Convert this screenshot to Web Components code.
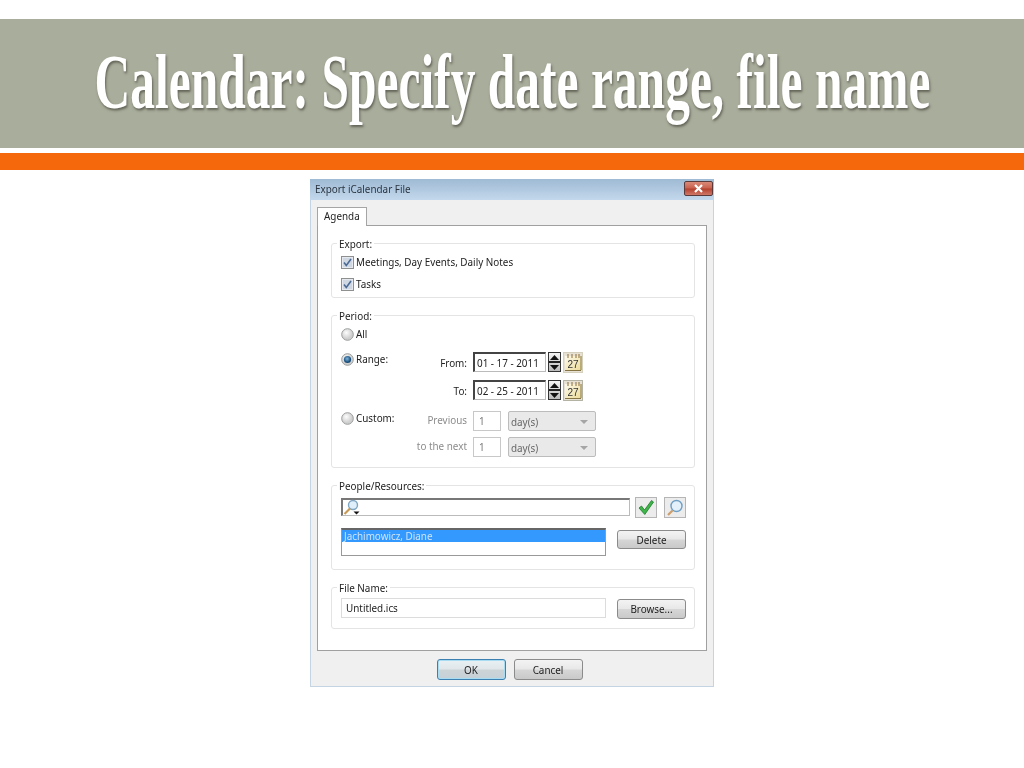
<!doctype html>
<html>
<head>
<meta charset="utf-8">
<title>Calendar: Specify date range, file name</title>
<style>
  html, body { margin: 0; background: #fff; }
  body { font-family: "Noto Sans", "DejaVu Sans", sans-serif; font-size: 9.9px; color: #222; }
</style>
</head>
<body>
<slide-page>
  <slide-title slot="title">Calendar: Specify date range, file name</slide-title>
  <export-dialog heading="Export iCalendar File" tab="Agenda">

    <group-box legend="Export:" pad="7px 9px 2px">
      <div style="display:flex;flex-direction:column">
        <check-row>Meetings, Day Events, Daily Notes</check-row>
        <check-row>Tasks</check-row>
      </div>
    </group-box>

    <group-box legend="Period:" pad="8px 9px 10px">
      <period-form></period-form>
    </group-box>

    <group-box legend="People/Resources:" pad="11px 8px 13px 9px">
      <people-form></people-form>
    </group-box>

    <group-box legend="File Name:" pad="10px 9px 9px">
      <div style="display:flex;align-items:flex-start;gap:11px">
        <text-box w="265" h="20" flat>Untitled.ics</text-box>
        <push-button w="69" h="20" style="margin-top:1px">Browse...</push-button>
      </div>
    </group-box>

    <push-button slot="buttons" w="69" h="21" focused>OK</push-button>
    <push-button slot="buttons" w="69" h="21">Cancel</push-button>
  </export-dialog>
</slide-page>

<script>
function make(name, css, html, setup) {
  customElements.define(name, class extends HTMLElement {
    connectedCallback() {
      if (this.shadowRoot) return
      const root = this.attachShadow({mode: 'open'})
      const attr = (k, d) => this.hasAttribute(k) ? (this.getAttribute(k) || true) : d
      root.innerHTML = `<style>${css}</style>${typeof html === 'function' ? html(attr) : html}`
      if (setup) setup(root, attr, this)
    }
  })
}

make('slide-page', `
  :host { display: block; height: 768px; overflow: hidden; }
  .band { margin-top: 19px; height: 129px; background: #a9ad9b; display: flex; align-items: center; justify-content: center; }
  .rule { margin-top: 5px; height: 17px; background: #f5680c; }
  main { display: flex; justify-content: center; padding: 9px 0 0 0; }
`, `
  <div class="band"><slot name="title"></slot></div>
  <div class="rule"></div>
  <main><slot></slot></main>
`)

make('slide-title', `
  :host { display: block; margin: -2px 0 0 1px; }
  span {
    display: inline-block; white-space: nowrap;
    font: bold 49.5px "Liberation Serif", serif; color: #fff;
    transform: scaleY(1.56);
    text-shadow: 1px 1px 2px rgba(60,60,50,.65);
  }
`, `<span><slot></slot></span>`)

make('export-dialog', `
  :host { display: block; width: 404px; height: 508px; margin-left: 0; }
  .win { height: 100%; box-sizing: border-box; background: #f0f0f0; border: 1px solid #c4d4e2; border-top: 0; display: flex; flex-direction: column; filter: blur(.3px); }
  .bar { height: 21px; margin: 0 -1px; flex: none; background: linear-gradient(#9fbad4, #c3d8ec); display: flex; align-items: center; justify-content: space-between; padding: 0 1px 0 5px; color: #2a3440; }
  .bar span { margin-top: -1px; }
  .close { width: 29px; height: 15px; box-sizing: border-box; margin-top: -3px; border: 1px solid #5a3a3a; border-radius: 2px; background: linear-gradient(#d98a78 0, #c9604e 48%, #b4402e 52%, #cf7868 100%); display: flex; align-items: center; justify-content: center; }
  .body { flex: 1; padding: 7px 6px 0; display: flex; flex-direction: column; }
  .tab { align-self: flex-start; width: 50px; height: 19px; box-sizing: border-box; background: #fff; border: 1px solid #a5a5a5; border-bottom: 0; padding-left: 6px; line-height: 17px; position: relative; z-index: 1; margin-bottom: -1px; }
  .panel { height: 426px; box-sizing: border-box; background: #fff; border: 1px solid #a0a0a0; padding: 17px 11px 0 13px; display: flex; flex-direction: column; gap: 17px; }
  .foot { display: flex; justify-content: center; gap: 8px; padding: 8px 0 0 0; margin-left: -5px; }
`, a => `
  <div class="win">
    <div class="bar"><span>${a('heading')}</span>
      <div class="close"><svg width="11" height="9" viewBox="0 0 11 9"><path d="M2 1l7 7M9 1L2 8" stroke="#fff" stroke-width="2.2" fill="none"/></svg></div>
    </div>
    <div class="body">
      <div class="tab">${a('tab')}</div>
      <div class="panel"><slot></slot></div>
      <div class="foot"><slot name="buttons"></slot></div>
    </div>
  </div>
`)

make('group-box', `
  :host { display: block; }
  .box { position: relative; border: 1px solid #e4e4e4; border-radius: 3px; }
  .legend { position: absolute; left: 5px; top: -6px; background: #fff; padding: 0 2px; line-height: 13px; }
`, a => `<div class="box" style="padding:${a('pad')}"><span class="legend">${a('legend')}</span><slot></slot></div>`)

make('check-row', `
  :host { display: flex; align-items: center; gap: 2px; height: 22px; }
  svg { flex: none; }
`, `
  <svg width="13" height="13" viewBox="0 0 13 13">
    <rect x=".5" y=".5" width="12" height="12" fill="#e6eaf0" stroke="#8e8f8f"/>
    <rect x="2" y="2" width="9" height="9" fill="#cfd7e2"/>
    <path d="M3 6.5l2.3 3L10 3" stroke="#4a6a96" stroke-width="1.6" fill="none"/>
  </svg>
  <slot></slot>
`)

make('radio-mark', `
  :host { display: inline-flex; flex: none; width: 13px; height: 13px; }
`, a => `
  <svg width="13" height="13" viewBox="0 0 13 13">
    <defs><radialGradient id="g" cx=".4" cy=".35"><stop offset="0" stop-color="#fdfdfd"/><stop offset="1" stop-color="#cfcfcf"/></radialGradient>
    <radialGradient id="d" cx=".45" cy=".4"><stop offset="0" stop-color="#7fb6dc"/><stop offset="1" stop-color="#164a78"/></radialGradient></defs>
    <circle cx="6.5" cy="6.5" r="5.8" fill="url(#g)" stroke="#9a9c9c"/>
    ${a('on') ? '<circle cx="6.5" cy="6.5" r="3.6" fill="url(#d)"/>' : ''}
  </svg>
`)

make('text-box', `
  :host { display: block; flex: none; }
  div { box-sizing: border-box; height: 100%; background: #fff; display: flex; align-items: center; white-space: nowrap; }
  .sunk { border: 1px solid #bbb; border-top: 2px solid #444; border-left: 2px solid #444; padding-left: 2px; color: #222; }
  .flat { border: 1px solid #dcdcdc; padding-left: 4px; }
  .off { border: 1px solid #c8c8c8; padding-left: 5px; color: #777; }
`, a => `<div class="${a('off') ? 'off' : a('flat') ? 'flat' : 'sunk'}" style="width:${a('w')}px;height:${a('h')}px"><slot></slot></div>`)

make('push-button', `
  :host { display: block; flex: none; }
  button { display: block; width: 100%; height: 100%; box-sizing: border-box; padding: 0; font: inherit; color: #222; border: 1px solid #8b8b8b; border-radius: 3px; background: linear-gradient(#f3f3f3 0, #e8e8e8 48%, #d6d6d6 52%, #c9c9c9 100%); }
  .focus { border: 1px solid #3c7fb1; box-shadow: inset 0 0 0 1px #a8dcf2; background: linear-gradient(#e9f1f5 0, #e0e6ea 48%, #cdd4d8 52%, #c4d0d6 100%); }
`, a => `<button class="${a('focused') ? 'focus' : ''}" style="width:${a('w')}px;height:${a('h')}px"><slot></slot></button>`)

make('date-picker', `
  :host { display: flex; flex: none; align-items: flex-start; gap: 2px; height: 20px; }
  .spin { width: 13px; height: 20px; box-sizing: border-box; border: 1px solid #333; background: linear-gradient(#f4f4f4, #bbb); }
  .spin { display: flex; flex-direction: column; }
  .spin i { flex: 1; display: flex; align-items: center; justify-content: center; }
  .spin i + i { border-top: 2px solid #222; }
`, a => `
  <text-box w="73" h="20">${a('value')}</text-box>
  <div class="spin">
    <i><svg width="9" height="5"><path d="M4.5 0L9 5H0z" fill="#111"/></svg></i>
    <i><svg width="9" height="5"><path d="M0 0h9L4.5 5z" fill="#111"/></svg></i>
  </div>
  <svg width="20" height="21" viewBox="0 0 20 21">
    <defs><linearGradient id="c" x1="0" y1="0" x2="1" y2="1"><stop offset="0" stop-color="#fdfaec"/><stop offset="1" stop-color="#ecdc9a"/></linearGradient></defs>
    <rect x=".5" y=".5" width="19" height="20" fill="#e6e1d2" stroke="${a('active') ? '#77775f' : '#d5cfbd'}" ${a('active') ? 'stroke-dasharray="1 1"' : ''}/>
    <rect x="2" y="4" width="16" height="14" fill="url(#c)"/>
    <path d="M5 2v4M9 2v4M13 2v4M16 2v4" stroke="#8a6d3a" stroke-width="1"/>
    <path d="M2 18.5h16M18 4v14" stroke="#857545"/>
    <text x="10" y="16" text-anchor="middle" font-family="Liberation Sans, sans-serif" font-size="10" fill="#333">27</text>
  </svg>
`)

make('combo-box', `
  :host { display: block; flex: none; }
  div { width: 88px; height: 20px; box-sizing: border-box; border: 1px solid #bcbcbc; border-radius: 2px; background: #e9e9e9; color: #666; display: flex; align-items: center; justify-content: space-between; padding: 1px 7px 0 2px; }
`, `<div><slot></slot><svg width="8" height="4"><path d="M0 0h8L4 4z" fill="#a5a5a5"/></svg></div>`)

make('period-form', `
  :host { display: block; }
  .row { display: flex; align-items: flex-start; height: 20px; }
  .pick { display: flex; align-items: center; gap: 2px; width: 74px; flex: none; line-height: 14px; }
  .lab { width: 52px; flex: none; text-align: right; line-height: 20px; padding-top: 1px; box-sizing: border-box; }
  .dim { color: #8c8c8c; padding-top: 0; line-height: 18px; }
  .ctl { margin-left: 6px; display: flex; gap: 7px; }
`, `
  <div class="row" style="padding-top:3px;box-sizing:border-box"><div class="pick"><radio-mark></radio-mark>All</div></div>
  <div class="row" style="margin-top:8px"><div class="pick"><radio-mark on></radio-mark>Range:</div><div class="lab">From:</div><div class="ctl"><date-picker value="01 - 17 - 2011"></date-picker></div></div>
  <div class="row" style="margin-top:8px"><div class="pick"></div><div class="lab">To:</div><div class="ctl"><date-picker value="02 - 25 - 2011" active></date-picker></div></div>
  <div class="row" style="margin-top:11px"><div class="pick"><radio-mark></radio-mark>Custom:</div><div class="lab dim">Previous</div><div class="ctl"><text-box w="28" h="20" off>1</text-box><combo-box>day(s)</combo-box></div></div>
  <div class="row" style="margin-top:6px"><div class="pick"></div><div class="lab dim">to the next</div><div class="ctl"><text-box w="28" h="20" off>1</text-box><combo-box>day(s)</combo-box></div></div>
`)

make('people-form', `
  :host { display: block; }
  .row { display: flex; align-items: flex-start; }
  .search { width: 289px; height: 18px; margin-top: 1px; box-sizing: border-box; background: #fff; border: 1px solid #bbb; border-top: 2px solid #777; border-left: 2px solid #777; }
  .search svg { display: block; margin-top: -1px; }
  .tool { width: 22px; height: 21px; box-sizing: border-box; border: 1px solid #b5b5b5; background: #ececec; display: flex; align-items: center; justify-content: center; flex: none; }
  .list { width: 265px; height: 28px; box-sizing: border-box; background: #fff; border: 1px solid #999; border-top: 2px solid #666; }
  .sel { background: #3399ff; color: #cfe4f7; height: 12px; line-height: 12px; padding-left: 2px; }
`, `
  <div class="row">
    <div class="search"><svg width="22" height="17" viewBox="0 0 22 17">
      <circle cx="10" cy="6" r="4.5" fill="#dff0fa" stroke="#7fa6c2" stroke-width="1.4"/>
      <path d="M7 9.5L1.5 15" stroke="#c99a55" stroke-width="2.2"/>
      <path d="M10.5 12.5h6l-3 3z" fill="#111"/>
    </svg></div>
    <div class="tool" style="margin-left:5px"><svg width="18" height="17" viewBox="0 0 18 17"><path d="M2 9l2.5-2 3 4L14.500 1.500 16.500 3 7.800 15.500z" fill="#3eb549" stroke="#1f7a2c" stroke-width=".8"/></svg></div>
    <div class="tool" style="margin-left:7px"><svg width="18" height="18" viewBox="0 0 18 18"><circle cx="10.500" cy="7" r="5.500" fill="#e4f1fa" stroke="#6f9fc4" stroke-width="1.400"/><path d="M6.500 11.500L2 16" stroke="#cf9f6a" stroke-width="2.200"/></svg></div>
  </div>
  <div class="row" style="margin-top:10px">
    <div class="list"><div class="sel">Jachimowicz, Diane</div></div>
    <push-button w="69" h="19" style="margin:2px 0 0 11px">Delete</push-button>
  </div>
`)
</script>
</body>
</html>
